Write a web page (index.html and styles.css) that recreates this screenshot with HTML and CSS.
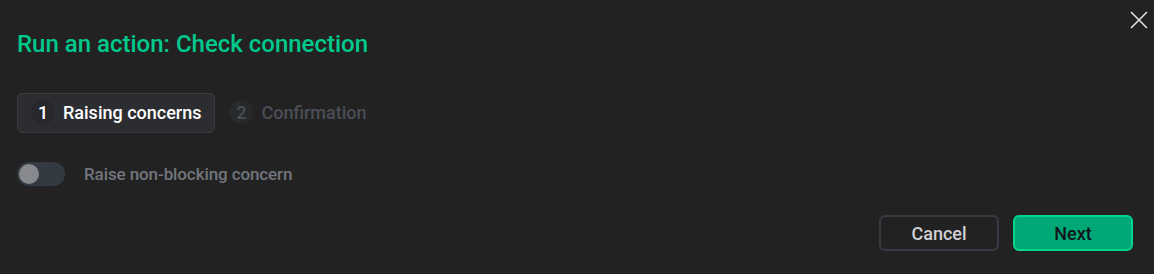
FILE: index.html
```
<!DOCTYPE html>
<html>
<head>
<meta charset="utf-8">
<link rel="stylesheet" href="styles.css">
</head>
<body>
<div class="dialog">
  <button class="close" aria-label="Close">
    <svg width="18" height="18" viewBox="0 0 18 18"><path d="M1 1L17 17M17 1L1 17" stroke="#e6e6e6" stroke-width="1.5" fill="none"/></svg>
  </button>
  <h1 class="title">Run an action: Check connection</h1>
  <div class="steps">
    <div class="step active"><span class="num">1</span><span class="label">Raising concerns</span></div>
    <div class="step"><span class="num">2</span><span class="label">Confirmation</span></div>
  </div>
  <div class="toggle-row">
    <span class="toggle"><span class="knob"></span></span>
    <span class="toggle-label">Raise non-blocking concern</span>
  </div>
  <div class="actions">
    <button class="btn cancel">Cancel</button>
    <button class="btn next">Next</button>
  </div>
</div>
</body>
</html>
```
FILE: styles.css
```
html, body {
  margin: 0;
  padding: 0;
  background: #222222;
  font-family: Roboto, "Noto Sans", sans-serif;
}
.dialog {
  position: relative;
  width: 1154px;
  height: 274px;
  box-sizing: border-box;
  padding: 29px 21px 0 17px;
  display: flex;
  flex-direction: column;
}
.close {
  position: absolute;
  top: 11px;
  right: 6px;
  background: none;
  border: none;
  padding: 0;
  width: 18px;
  height: 18px;
  cursor: pointer;
}
.close svg { display: block; }
.title {
  margin: 0;
  font-size: 24px;
  font-weight: 500;
  color: #00c98d;
  line-height: 30px;
}
.steps {
  display: flex;
  gap: 14px;
  margin-top: 34px;
  align-items: center;
}
.step {
  display: flex;
  align-items: center;
  height: 40px;
  box-sizing: border-box;
  gap: 8px;
  color: #4a4e56;
  font-size: 18px;
  font-weight: 500;
  padding-bottom: 2px;
}
.step.active {
  background: #2c2d31;
  border: 1px solid #393b41;
  border-radius: 5px;
  padding: 0 13px 2px 13px;
  color: #ffffff;
}
.num {
  width: 24px;
  height: 24px;
  border-radius: 50%;
  background: #28292c;
  display: flex;
  align-items: center;
  justify-content: center;
  font-size: 18px;
}
.step.active .num {
  background: #27282b;
}
.toggle-row {
  display: flex;
  align-items: center;
  gap: 19px;
  margin-top: 29px;
}
.toggle {
  width: 48px;
  height: 24px;
  border-radius: 12px;
  background: #343a42;
  display: flex;
  align-items: center;
  padding: 0 2px;
  box-sizing: border-box;
}
.knob {
  width: 20px;
  height: 20px;
  border-radius: 50%;
  background: #88898f;
}
.toggle-label {
  color: #71757c;
  font-size: 17px;
  font-weight: 500;
  letter-spacing: -0.1px;
}
.actions {
  display: flex;
  justify-content: flex-end;
  gap: 14px;
  margin-top: 29px;
}
.btn {
  width: 120px;
  height: 36px;
  border-radius: 6px;
  font-family: Roboto, "Noto Sans", sans-serif;
  font-size: 18px;
  font-weight: 500;
  cursor: pointer;
}
.cancel {
  background: transparent;
  border: 2px solid #363b43;
  color: #cfd0d4;
}
.next {
  background: #00a877;
  border: 2px solid #00d590;
  color: #10151a;
}
```
